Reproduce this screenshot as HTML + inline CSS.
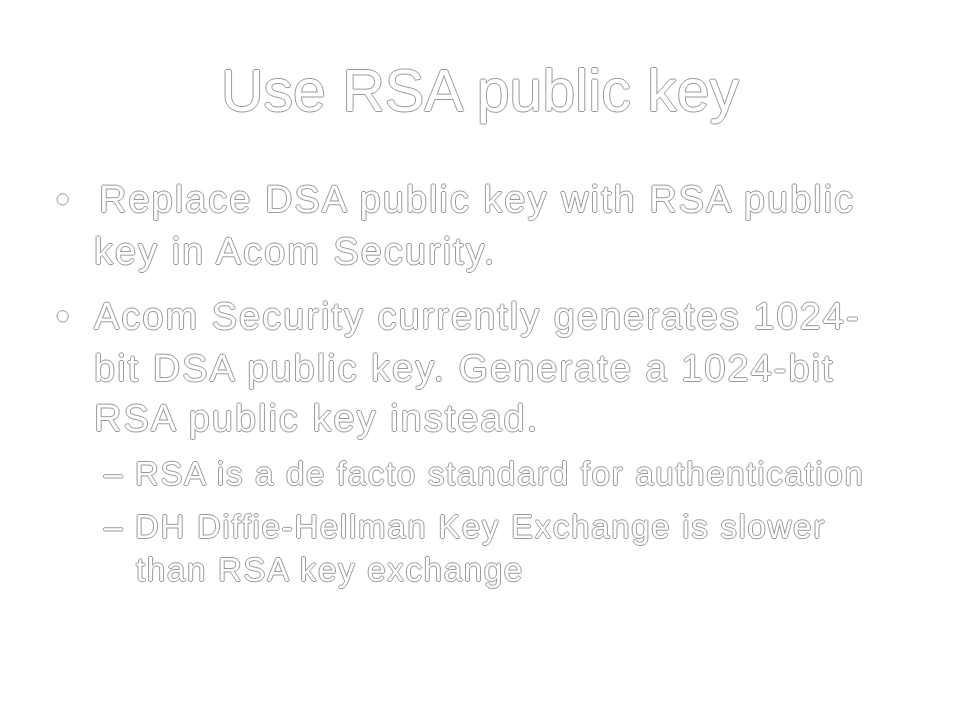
<!DOCTYPE html>
<html><head><meta charset="utf-8"><style>
html,body{margin:0;padding:0;background:#fff;width:960px;height:720px;overflow:hidden}
.t{position:absolute;white-space:nowrap;font-family:"Liberation Sans",sans-serif;color:#fff;line-height:1;
text-shadow:1px 0 0 #999,-1px 0 0 #999,0 1px 0 #999,0 -1px 0 #999}
.h{font-size:59px;left:0;width:960px;text-align:center}
.b{font-size:38px;letter-spacing:2px}
.s{font-size:33px;letter-spacing:1.7px}
</style></head><body>
<div class="t h" style="top:62px">Use RSA public key</div>
<div class="t b" style="left:56px;top:181px">•</div>
<div class="t b" style="left:99px;top:181px">Replace DSA public key with RSA public</div>
<div class="t b" style="left:94px;top:233px">key in Acom Security.</div>
<div class="t b" style="left:56px;top:298px">•</div>
<div class="t b" style="left:94px;top:298px">Acom Security currently generates 1024-</div>
<div class="t b" style="left:94px;top:350px">bit DSA public key. Generate a 1024-bit</div>
<div class="t b" style="left:94px;top:400px">RSA public key instead.</div>
<div class="t s" style="left:104px;top:457px">– RSA is a de facto standard for authentication</div>
<div class="t s" style="left:104px;top:510px">– DH Diffie-Hellman Key Exchange is slower</div>
<div class="t s" style="left:136px;top:553px">than RSA key exchange</div>
</body></html>
